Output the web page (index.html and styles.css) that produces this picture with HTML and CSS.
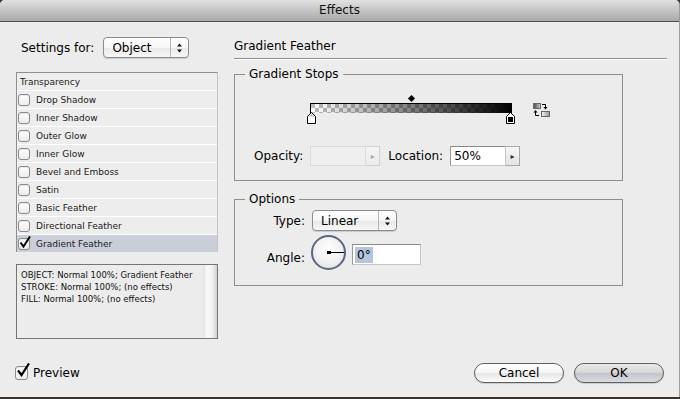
FILE: index.html
```html
<!DOCTYPE html>
<html lang="en">
  <head>
    <meta charset="utf-8">
    <title>Effects</title>
    <link rel="stylesheet" href="styles.css">
  </head>
  <body>
    <div class="window">
      <div class="titlebar">Effects</div>
      <div class="main">
        <div class="side">
          <div class="settings">
            <span class="settings__label">Settings for:</span>
            <div class="popup popup--object">
              <span class="popup__value">Object</span>
              <span class="popup__arrows">
                <svg width="7" height="10" viewBox="0 0 7 10"><path d="M3.5 0.5L6 3.5H1Z M3.5 9.5L6 6.5H1Z" fill="#111"/></svg>
              </span>
            </div>
          </div>
          <ul class="effects">
            <li class="effects__head">Transparency</li>
            <li><span class="check"></span>Drop Shadow</li>
            <li><span class="check"></span>Inner Shadow</li>
            <li><span class="check"></span>Outer Glow</li>
            <li><span class="check"></span>Inner Glow</li>
            <li><span class="check"></span>Bevel and Emboss</li>
            <li><span class="check"></span>Satin</li>
            <li><span class="check"></span>Basic Feather</li>
            <li><span class="check"></span>Directional Feather</li>
            <li class="is-selected">
              <span class="check check--on">
                <svg width="14" height="14" viewBox="0 0 14 14"><path d="M2.5 6.5L5.5 10.5L12 0.5" fill="none" stroke="#000" stroke-width="2"/></svg>
              </span>Gradient Feather
            </li>
          </ul>
          <div class="summary">
            <div class="summary__text">
              OBJECT: Normal 100%; Gradient Feather<br>
              STROKE: Normal 100%; (no effects)<br>
              FILL: Normal 100%; (no effects)
            </div>
            <div class="summary__scroll"></div>
          </div>
        </div>

        <div class="panel">
          <h1 class="panel__title">Gradient Feather</h1>

          <fieldset class="group group--stops">
            <legend>Gradient Stops</legend>
            <div class="ramp-row">
              <div class="ramp">
                <div class="ramp__bar"></div>
                <span class="ramp__mid"></span>
                <svg class="ramp__stop ramp__stop--start" width="9" height="13" viewBox="0 0 9 13">
                  <path d="M0.5 12.5V5.5L4.5 1.5L8.5 5.5V12.5Z" fill="#fff" stroke="#000"/>
                  <path d="M2 5.5L4.5 3L7 5.5Z" fill="#bbb"/>
                </svg>
                <svg class="ramp__stop ramp__stop--end" width="9" height="13" viewBox="0 0 9 13">
                  <path d="M0.5 12.5V5.5L4.5 1.5L8.5 5.5V12.5Z" fill="#fff" stroke="#000"/>
                  <rect x="2" y="6" width="5" height="5" fill="#000"/>
                </svg>
              </div>
              <svg class="swap" width="18" height="14" viewBox="0 0 18 14">
                <defs>
                  <linearGradient id="g1" x1="0" x2="1"><stop offset="0" stop-color="#444"/><stop offset="1" stop-color="#ccc"/></linearGradient>
                  <linearGradient id="g2" x1="0" x2="1"><stop offset="0" stop-color="#f4f4f4"/><stop offset="1" stop-color="#999"/></linearGradient>
                </defs>
                <rect x="0.5" y="0.5" width="7" height="5" fill="url(#g1)" stroke="#666"/>
                <path d="M9 1.5H12.5V4.5" fill="none" stroke="#000"/>
                <path d="M10.5 4H14.5L12.5 6.5Z" fill="#000"/>
                <path d="M2.5 9V12.5H6" fill="none" stroke="#000"/>
                <path d="M0.5 9.5H4.5L2.5 7Z" fill="#000"/>
                <rect x="8.5" y="8.5" width="8" height="5" fill="url(#g2)" stroke="#666"/>
              </svg>
            </div>
            <div class="stop-fields">
              <span class="stop-fields__label">Opacity:</span>
              <div class="field field--off">
                <span class="field__box"></span>
                <span class="field__step">&#9656;</span>
              </div>
              <span class="stop-fields__label stop-fields__label--loc">Location:</span>
              <div class="field">
                <span class="field__box">50%</span>
                <span class="field__step">&#9656;</span>
              </div>
            </div>
          </fieldset>

          <fieldset class="group group--options">
            <legend>Options</legend>
            <div class="options">
              <span class="options__label">Type:</span>
              <div class="popup popup--type">
                <span class="popup__value">Linear</span>
                <span class="popup__arrows">
                  <svg width="7" height="10" viewBox="0 0 7 10"><path d="M3.5 0.5L6 3.5H1Z M3.5 9.5L6 6.5H1Z" fill="#111"/></svg>
                </span>
              </div>
              <span class="options__label options__label--angle">Angle:</span>
              <div class="angle">
                <div class="dial"></div>
                <div class="angle__input"><span class="angle__sel">0°</span></div>
              </div>
            </div>
          </fieldset>
        </div>
      </div>

      <div class="footer">
        <div class="preview">
          <span class="check check--big check--on">
            <svg width="16" height="16" viewBox="0 0 16 16"><path d="M3 7.5L6.5 12L14 0.5" fill="none" stroke="#000" stroke-width="2.2"/></svg>
          </span>
          Preview
        </div>
        <div class="buttons">
          <button class="btn">Cancel</button>
          <button class="btn btn--default">OK</button>
        </div>
      </div>
    </div>
  </body>
</html>
```

FILE: styles.css
```css
*, *::after, *::before {
  margin: 0;
  padding: 0;
  box-sizing: border-box;
}
body {
  width: 680px;
  height: 399px;
  background-color: #3b342e;
  font-family: "DejaVu Sans", sans-serif;
  font-size: 12px;
  color: #000;
}
.window {
  display: flex;
  flex-direction: column;
  width: 680px;
  height: 397px;
  background-color: #ececec;
  border-right: 1px solid #9c9c9c;
  border-top-left-radius: 5px;
  border-top-right-radius: 5px;
  overflow: hidden;
}
.titlebar {
  height: 22px;
  line-height: 21px;
  text-align: center;
  color: #111;
  background-image: linear-gradient(#e2e2e2, #c4c4c4 50%, #a9a9a9);
  border-bottom: 1px solid #505050;
}
.main {
  display: flex;
  gap: 16px;
  padding: 15px 0 0 16px;
}

/* left column */
.side {
  display: flex;
  flex-direction: column;
  width: 202px;
}
.settings {
  display: flex;
  align-items: center;
  gap: 9px;
  height: 21px;
  padding-left: 5px;
}
.popup {
  display: flex;
  align-items: stretch;
  height: 21px;
  border: 1px solid #8c8c8c;
  border-radius: 4px;
  background-image: linear-gradient(#ffffff, #f6f6f6 50%, #e9e9e9 55%, #f7f7f7);
  box-shadow: 0 1px 1px rgba(0, 0, 0, 0.15);
}
.popup__value {
  flex: 1;
  display: flex;
  align-items: center;
  padding-left: 8px;
}
.popup__arrows {
  display: flex;
  align-items: center;
  justify-content: center;
  width: 18px;
  border-left: 1px solid #b4b4b4;
}
.popup--object {
  width: 86px;
}
.popup--type {
  width: 85px;
}
.effects {
  list-style: none;
  margin-top: 14px;
  border-top: 1px solid #8e8e8e;
  border-left: 1px solid #8e8e8e;
  border-right: 1px solid #c4c4c4;
  font-size: 9px;
  color: #1a1a1a;
}
.effects li {
  display: flex;
  align-items: center;
  gap: 6px;
  height: 18px;
  padding-left: 1px;
  border-bottom: 1px solid #fff;
  background-color: #ededed;
}
.effects li:last-child {
  border-bottom: none;
  height: 17px;
}
.effects .effects__head {
  padding-left: 3px;
}
.effects .is-selected {
  background-color: #c9ced8;
}
.check {
  position: relative;
  display: inline-block;
  width: 12px;
  height: 12px;
  border: 1px solid #8a8a8a;
  border-radius: 3px;
  background-image: linear-gradient(#ffffff, #ececec);
  box-shadow: inset 0 1px 1px rgba(0, 0, 0, 0.08);
}
.check svg {
  position: absolute;
  left: -1px;
  top: -3px;
}
.check--big {
  width: 13px;
  height: 14px;
}
.check--big svg {
  left: -1px;
  top: -4px;
}
.summary {
  display: flex;
  height: 75px;
  margin-top: 12px;
  border: 1px solid #757575;
}
.summary__text {
  flex: 1;
  padding: 4px 0 0 4px;
  font-size: 8.5px;
  line-height: 12px;
  color: #111;
}
.summary__scroll {
  width: 14px;
  background-image: linear-gradient(to right, #e2e2e2, #fafafa 30%, #eeeeee 70%, #cfcfcf);
}

/* right column */
.panel {
  display: flex;
  flex-direction: column;
  width: 433px;
}
.panel__title {
  font-size: 12px;
  font-weight: normal;
  line-height: 15px;
  padding: 2px 0 4px;
  border-bottom: 1px solid #8e8e8e;
  box-shadow: 0 1px 0 #fff;
}
.group {
  width: 389px;
  min-width: 0;
  padding: 0;
  border: 1px solid #8e8e8e;
}
.group legend {
  margin-left: 10px;
  padding: 0 4px;
  line-height: 15px;
}
.group--stops {
  margin-top: 8px;
  padding-bottom: 14px;
}
.group--options {
  margin-top: 11px;
  padding-bottom: 15px;
}
.ramp-row {
  display: flex;
  align-items: flex-start;
  margin-top: 21px;
  padding-left: 75px;
  height: 22px;
}
.ramp {
  position: relative;
  width: 202px;
  height: 22px;
}
.ramp__bar {
  height: 10px;
  border-top: 1px solid #000;
  border-left: 1px solid #000;
  background:
    linear-gradient(to right, rgba(0, 0, 0, 0), #000),
    repeating-conic-gradient(#fff 0 25%, #bdbdbd 0 50%) 0 0 / 8px 8px;
}
.ramp__mid {
  position: absolute;
  left: 99px;
  top: -7px;
  width: 5px;
  height: 5px;
  background-color: #000;
  transform: rotate(45deg);
}
.ramp__stop {
  position: absolute;
  top: 8px;
}
.ramp__stop--start {
  left: -3px;
}
.ramp__stop--end {
  right: -3px;
}
.swap {
  margin-left: 21px;
}
.stop-fields {
  display: flex;
  align-items: center;
  height: 20px;
  margin-top: 21px;
  padding-left: 19px;
}
.stop-fields__label {
  margin-right: 7px;
}
.stop-fields__label--loc {
  margin-left: 8px;
}
.field {
  display: flex;
  height: 20px;
}
.field__box {
  display: flex;
  align-items: center;
  width: 56px;
  padding-left: 3px;
  font-size: 12px;
  background-color: #fff;
  border: 1px solid #c6c6c6;
  border-top-color: #8a8a8a;
  border-left-color: #9a9a9a;
}
.field__step {
  display: flex;
  align-items: center;
  justify-content: center;
  width: 14px;
  font-size: 8px;
  color: #333;
  border: 1px solid #a8a8a8;
  border-left: none;
  background-image: linear-gradient(#f6f6f6, #e4e4e4);
}
.field--off .field__box {
  background-color: #efefef;
  border-color: #dadada;
}
.field--off .field__step {
  color: #aaa;
  border-color: #cfcfcf;
  background-image: linear-gradient(#f4f4f4, #ebebeb);
}
.options {
  display: grid;
  grid-template-columns: 70px auto;
  column-gap: 7px;
  row-gap: 4px;
  align-items: center;
  margin-top: 3px;
}
.options__label {
  text-align: right;
}
.options__label--angle {
  align-self: end;
  padding-bottom: 5px;
}
.angle {
  display: flex;
  align-items: center;
  gap: 6px;
  margin-left: -1px;
}
.dial {
  position: relative;
  width: 35px;
  height: 35px;
  border: 2px solid #5a6784;
  border-radius: 50%;
  background-image: radial-gradient(circle at 50% 40%, #ffffff, #f1f1f1 55%, #d8d8d8);
}
.dial::before {
  content: '';
  position: absolute;
  left: 14px;
  top: 14px;
  width: 4px;
  height: 3px;
  background-color: #000;
}
.dial::after {
  content: '';
  position: absolute;
  left: 16px;
  top: 15px;
  width: 15px;
  height: 1px;
  background-color: #000;
}
.angle__input {
  display: flex;
  align-items: center;
  width: 69px;
  height: 21px;
  margin-top: 4px;
  padding-left: 2px;
  background-color: #fff;
  border: 1px solid #c6c6c6;
  border-top-color: #8a8a8a;
  border-left-color: #9a9a9a;
}
.angle__sel {
  padding: 1px 2px;
  background-color: #b5c5dc;
}

/* bottom bar */
.footer {
  display: flex;
  align-items: center;
  justify-content: space-between;
  margin-top: auto;
  padding: 0 15px 14px 15px;
}
.preview {
  display: flex;
  align-items: center;
  gap: 5px;
  font-size: 12px;
}
.buttons {
  display: flex;
  gap: 10px;
}
.btn {
  width: 90px;
  height: 20px;
  font-family: "DejaVu Sans", sans-serif;
  font-size: 12px;
  color: #000;
  border: 1px solid #606060;
  border-radius: 10px;
  background-image: linear-gradient(#ffffff, #f5f5f5 50%, #e6e6e6 52%, #fbfbfb);
  box-shadow: 0 1px 1px rgba(0, 0, 0, 0.15);
}
.btn--default {
  background-image: linear-gradient(#e9e9e9, #d6d6d6 50%, #c2c5ca 52%, #d9dbde);
}
```
